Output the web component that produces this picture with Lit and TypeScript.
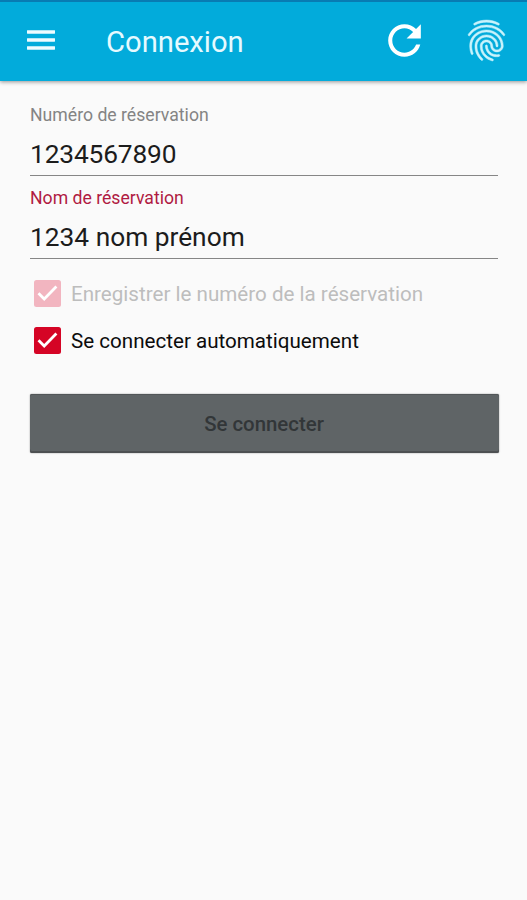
import { LitElement, html, css, svg } from "lit";
import { customElement, property } from "lit/decorators.js";

const menuIcon = html`<svg class="menu" viewBox="0 0 28 20">
  ${[0.2, 8.2, 16.2].map((y) => svg`<rect x="0" y=${y} width="28" height="3.5" rx=".4"></rect>`)}
</svg>`;

const refreshIcon = html`<svg class="glyph" viewBox="0 0 24 24">
  <path d="M17.65 6.35C16.2 4.9 14.21 4 12 4c-4.42 0-7.99 3.58-7.99 8s3.57 8 7.99 8c3.73 0 6.84-2.55 7.73-6h-2.08c-.82 2.33-3.04 4-5.65 4-3.31 0-6-2.69-6-6s2.69-6 6-6c1.66 0 3.14.69 4.22 1.78L13 11h7V4l-2.35 2.35z"></path>
</svg>`;

const fingerprintIcon = html`<svg class="glyph print" viewBox="0 0 24 24">
  <path d="M17.81 4.47c-.08 0-.16-.02-.23-.06C15.66 3.42 14 3 12.01 3c-1.98 0-3.86.47-5.57 1.41-.24.13-.54.04-.68-.2-.13-.24-.04-.55.2-.68C7.82 2.52 9.86 2 12.01 2c2.13 0 3.99.47 6.03 1.52.25.13.34.43.21.67-.09.18-.26.28-.44.28zM3.5 9.72c-.1 0-.2-.03-.29-.09-.23-.16-.28-.47-.12-.7.99-1.4 2.25-2.5 3.75-3.27C9.98 4.04 14 4.03 17.15 5.65c1.5.77 2.76 1.86 3.75 3.25.16.22.11.54-.12.7-.23.16-.54.11-.7-.12-.9-1.26-2.04-2.25-3.39-2.94-2.87-1.47-6.54-1.47-9.4.01-1.36.7-2.5 1.7-3.4 2.96-.08.14-.23.21-.39.21zm6.25 12.07c-.13 0-.26-.05-.35-.15-.87-.87-1.34-1.43-2.01-2.64-.69-1.23-1.05-2.73-1.05-4.34 0-2.97 2.54-5.39 5.66-5.39s5.66 2.42 5.66 5.39c0 .28-.22.5-.5.5s-.5-.22-.5-.5c0-2.42-2.09-4.39-4.66-4.39-2.57 0-4.66 1.97-4.66 4.39 0 1.44.32 2.77.93 3.85.64 1.15 1.08 1.64 1.85 2.42.19.2.19.51 0 .71-.11.1-.24.15-.37.15zm7.17-1.85c-1.19 0-2.24-.3-3.1-.89-1.49-1.01-2.38-2.65-2.38-4.39 0-.28.22-.5.5-.5s.5.22.5.5c0 1.41.72 2.74 1.94 3.56.71.48 1.54.71 2.54.71.24 0 .64-.03 1.04-.1.27-.05.53.13.58.41.05.27-.13.53-.41.58-.57.11-1.07.12-1.21.12zM14.91 22c-.04 0-.09-.01-.13-.02-1.59-.44-2.63-1.03-3.72-2.1-1.4-1.39-2.17-3.24-2.17-5.22 0-1.62 1.38-2.94 3.08-2.94 1.7 0 3.08 1.32 3.08 2.94 0 1.07.93 1.94 2.08 1.94s2.08-.87 2.08-1.94c0-3.77-3.25-6.83-7.25-6.83-2.84 0-5.44 1.58-6.61 4.03-.39.81-.59 1.76-.59 2.8 0 .78.07 2.01.67 3.61.1.26-.03.55-.29.64-.26.1-.55-.04-.64-.29-.49-1.31-.73-2.61-.73-3.96 0-1.2.23-2.29.68-3.24 1.33-2.79 4.28-4.6 7.51-4.6 4.55 0 8.25 3.51 8.25 7.83 0 1.62-1.38 2.94-3.08 2.94s-3.08-1.32-3.08-2.94c0-1.07-.93-1.94-2.08-1.94s-2.08.87-2.08 1.94c0 1.71.66 3.31 1.87 4.51.95.94 1.86 1.46 3.27 1.85.27.07.42.35.35.61-.05.23-.26.38-.47.38z"></path>
</svg>`;

@customElement("text-field")
class TextField extends LitElement {
  @property() label = "";
  @property() value = "";
  static styles = css`
    :host { display: block; height: 83px; }
    .label { height: 30px; line-height: 30px; font-size: 17.65px; color: var(--label, #848484); }
    .value { height: 45px; line-height: 49px; font-size: 26.3px; letter-spacing: var(--tracking, 0); color: #1c1c1c; border-bottom: 1.5px solid #868686; white-space: nowrap; }
  `;
  render() {
    return html`<div class="label">${this.label}</div>
      <div class="value">${this.value}</div>`;
  }
}

@customElement("check-row")
class CheckRow extends LitElement {
  static styles = css`
    :host { display: flex; align-items: center; gap: 10px; height: 47px; padding-left: 4px; font-size: 20.6px; white-space: nowrap; color: var(--text, #0c0c0c); }
    .box { width: 27px; height: 27px; border-radius: 2.5px; background: var(--box, #d50425); flex: none; }
    svg { display: block; width: 27px; height: 27px; fill: none; stroke: #fff; stroke-width: 2.8; }
  `;
  render() {
    return html`<div class="box"><svg viewBox="0 0 27 27"><path d="M4.5 13.3 10.2 19 22.4 6.6"></path></svg></div>
      <slot></slot>`;
  }
}

@customElement("app-root")
class AppRoot extends LitElement {
  static styles = css`
    :host { display: block; height: 900px; overflow: hidden; background: #fafafa; font-family: Roboto, "Liberation Sans", sans-serif; }
    .bar { box-sizing: border-box; height: 81px; display: flex; align-items: center; padding: 0 16px 0 27px; background: #02abdb; border-top: 2px solid #087bb3; box-shadow: 0 1px 4px rgba(0, 0, 0, .42); }
    .menu { width: 28px; height: 20px; fill: #eefcff; margin-right: 51px; margin-top: -2.5px; }
    .title { flex: 1; font-size: 29.2px; line-height: 40px; color: #e6faff; margin-top: 1px; }
    .glyph { width: 49px; height: 49px; margin-top: -1.5px; fill: #fff; }
    .print { margin-left: 33px; fill: #c9f3fc; stroke: #c9f3fc; stroke-width: .25; }
    .form { padding: 19px 29px 0 30px; }
    .number { --tracking: -.15px; }
    .error { --label: #b01a42; }
    .checks { padding-top: 4px; }
    .disabled { --text: #bdbdbd; --box: #f2b5c0; }
    .submit { display: block; box-sizing: border-box; width: 469px; height: 59px; margin: 30px 0 0 -.5px; padding: 0; border: 0; border-radius: 2px; background: #5f6466; color: #323638; font: 500 20.4px Roboto, "Liberation Sans", sans-serif; box-shadow: inset 0 -2px #4d5052, inset 0 1px #525658, 0 0 1.5px #777; }
  `;
  render() {
    return html`
      <header class="bar">
        ${menuIcon}
        <div class="title">Connexion</div>
        ${refreshIcon} ${fingerprintIcon}
      </header>
      <main class="form">
        <text-field class="number" label="Numéro de réservation" value="1234567890"></text-field>
        <text-field class="error" label="Nom de réservation" value="1234 nom prénom"></text-field>
        <div class="checks">
          <check-row class="disabled">Enregistrer le numéro de la réservation</check-row>
          <check-row>Se connecter automatiquement</check-row>
        </div>
        <button class="submit">Se connecter</button>
      </main>`;
  }
}
